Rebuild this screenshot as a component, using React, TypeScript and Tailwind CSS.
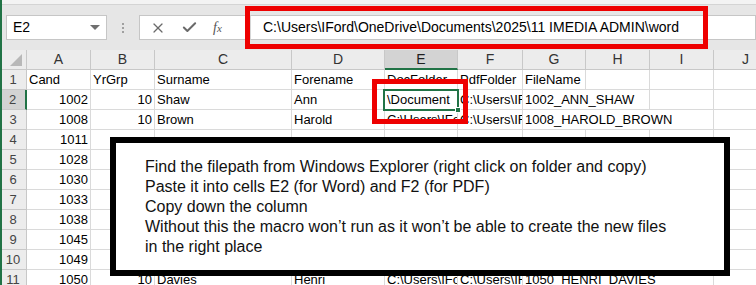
import React from "react";
import { X, Check } from "lucide-react";

const W = [
  "w-[27px]",
  "w-[64px]",
  "w-[64px]",
  "w-[137px]",
  "w-[93px]",
  "w-[73px]",
  "w-[65px]",
  "w-[63px]",
  "w-[64px]",
  "w-[64px]",
  "w-[64px]",
];

const LETTERS = ["A", "B", "C", "D", "E", "F", "G", "H", "I", "J"];
const PATH = "C:\\Users\\IFord\\OneDrive\\Documents\\2025\\11 IMEDIA ADMIN\\word";

type Row = {
  cand: string;
  yr?: string;
  surname?: string;
  forename?: string;
  doc?: string;
  pdf?: string;
  file?: string;
  span?: number;
};

const rows: Row[] = [
  { cand: "Cand", yr: "YrGrp", surname: "Surname", forename: "Forename", doc: "DocFolder", pdf: "PdfFolder", file: "FileName" },
  { cand: "1002", yr: "10", surname: "Shaw", forename: "Ann", doc: "\\Document", pdf: PATH, file: "1002_ANN_SHAW", span: 2 },
  { cand: "1008", yr: "10", surname: "Brown", forename: "Harold", doc: PATH, pdf: PATH, file: "1008_HAROLD_BROWN", span: 3 },
  { cand: "1011" },
  { cand: "1028" },
  { cand: "1030" },
  { cand: "1033" },
  { cand: "1038" },
  { cand: "1045" },
  { cand: "1049" },
  { cand: "1050", yr: "10", surname: "Davies", forename: "Henri", doc: PATH, pdf: PATH, file: "1050_HENRI_DAVIES", span: 3 },
];

const cellBase =
  "shrink-0 h-[20px] border-r border-b border-[#dadada] overflow-hidden whitespace-nowrap leading-[19px] px-[2px]";

function Cell({ w, children, right }: { w: string; children?: React.ReactNode; right?: boolean }) {
  return <div className={`${w} ${cellBase} ${right ? "text-right" : ""}`}>{children}</div>;
}

function DataRow({ row, index }: { row: Row; index: number }) {
  const num = index > 0;
  const selected = index === 1;
  const span = row.span ?? 1;
  return (
    <div className="flex">
      <div
        className={`${W[0]} shrink-0 h-[20px] border-b border-[#c8c8c8] text-center leading-[19px] text-[#444] ${
          selected ? "bg-[#d3d3d3] border-r-2 border-r-[#217346]" : "bg-[#ececec] border-r border-r-[#c8c8c8]"
        }`}
      >
        {index + 1}
      </div>
      <Cell w={W[1]} right={num}>{row.cand}</Cell>
      <Cell w={W[2]} right={num}>{row.yr}</Cell>
      <Cell w={W[3]}>{row.surname}</Cell>
      <Cell w={W[4]}>{row.forename}</Cell>
      <Cell w={W[5]}>{row.doc}</Cell>
      <Cell w={W[6]}>{row.pdf}</Cell>
      {span === 1 && (
        <>
          <Cell w={W[7]}>{row.file}</Cell>
          <Cell w={W[8]} />
          <Cell w={W[9]} />
        </>
      )}
      {span === 2 && (
        <>
          <Cell w="w-[127px]">{row.file}</Cell>
          <Cell w={W[9]} />
        </>
      )}
      {span === 3 && <Cell w="w-[191px]">{row.file}</Cell>}
      <Cell w={W[10]} />
    </div>
  );
}

export default function App() {
  return (
    <div
      className="relative w-[756px] h-[285px] overflow-hidden bg-white text-[13px] text-black"
      style={{ fontFamily: '"Liberation Sans", Arial, sans-serif' }}
    >
      <div className="absolute left-0 top-0 bottom-0 w-[2px] bg-[#217346] z-10" />

      {/* ribbon remnant */}
      <div className="h-[5px] bg-[#f3f3f3] border-b border-[#d4d4d4]" />

      {/* formula bar */}
      <div className="h-[45px] bg-[#e6e6e6] flex items-start pt-[10px] pl-[6px]">
        <div className="w-[101px] h-[25px] bg-white border border-[#c6c6c6] flex items-center justify-between pl-[6px] pr-[6px]">
          <span className="text-[14px]">E2</span>
          <div className="w-0 h-0 border-l-[5px] border-r-[5px] border-t-[5px] border-l-transparent border-r-transparent border-t-[#6f6f6f]" />
        </div>
        <div className="w-[32px] h-[25px] flex flex-col items-center justify-center gap-[2px]">
          <div className="w-[2px] h-[2px] bg-[#a0a0a0]" />
          <div className="w-[2px] h-[2px] bg-[#a0a0a0]" />
          <div className="w-[2px] h-[2px] bg-[#a0a0a0]" />
        </div>
        <div className="w-[111px] h-[25px] bg-white border border-[#c6c6c6] border-r-0 flex items-center pl-[10px] gap-[15px]">
          <X className="w-[16px] h-[16px] text-[#6a6a6a]" strokeWidth={1.8} />
          <Check className="w-[17px] h-[17px] text-[#6a6a6a]" strokeWidth={2.8} />
          <span
            className="italic text-[14px] text-[#555]"
            style={{ fontFamily: '"Liberation Serif", "Times New Roman", serif' }}
          >
            f<span className="text-[11px]">x</span>
          </span>
        </div>
        <div className="flex-1 h-[25px] bg-white border border-[#c6c6c6] border-l-[#d6d6d6] flex items-center pl-[12px] text-[14px]">
          {PATH}
        </div>
      </div>

      {/* column headers */}
      <div className="flex">
        <div className={`${W[0]} shrink-0 h-[20px] bg-[#ececec] border-r border-b border-[#c8c8c8] relative`}>
          <svg className="absolute right-[4px] bottom-[3px]" width="12" height="12" viewBox="0 0 12 12">
            <polygon points="12,0 12,12 0,12" fill="#b8b8b8" />
          </svg>
        </div>
        {LETTERS.map((l, i) => (
          <div
            key={l}
            className={`${W[i + 1]} shrink-0 h-[20px] border-r border-[#c8c8c8] text-center leading-[19px] text-[14px] ${
              l === "E"
                ? "bg-[#d3d3d3] border-b-2 border-b-[#217346] text-[#1f1f1f]"
                : "bg-[#ececec] border-b border-b-[#c8c8c8] text-[#333]"
            }`}
          >
            {l}
          </div>
        ))}
      </div>

      {rows.map((r, i) => (
        <DataRow key={i} row={r} index={i} />
      ))}

      {/* active cell E2 */}
      <div className="absolute left-[383px] top-[89px] w-[76px] h-[22px] border-2 border-[#217346]">
        <div className="absolute right-[-4px] bottom-[-4px] w-[6px] h-[6px] bg-[#217346] border border-white" />
      </div>

      {/* red annotation boxes */}
      <div className="absolute left-[245px] top-[6px] w-[463px] h-[43px] border-[5px] border-[#ee0000]" />
      <div className="absolute left-[372px] top-[79px] w-[96px] h-[45px] border-[5px] border-[#ee0000]" />

      {/* note box */}
      <div
        className="absolute left-[110px] top-[137px] w-[620px] h-[139px] bg-white border-[6px] border-black pt-[14px] pl-[29px] text-[16px] leading-[20px] text-[#111]"
        style={{ fontFamily: '"Liberation Sans", Helvetica, Arial, sans-serif' }}
      >
        <div>Find the filepath from Windows Explorer (right click on folder and copy)</div>
        <div>Paste it into cells E2 (for Word) and F2 (for PDF)</div>
        <div>Copy down the column</div>
        <div>Without this the macro won’t run as it won’t be able to create the new files</div>
        <div>in the right place</div>
      </div>
    </div>
  );
}
